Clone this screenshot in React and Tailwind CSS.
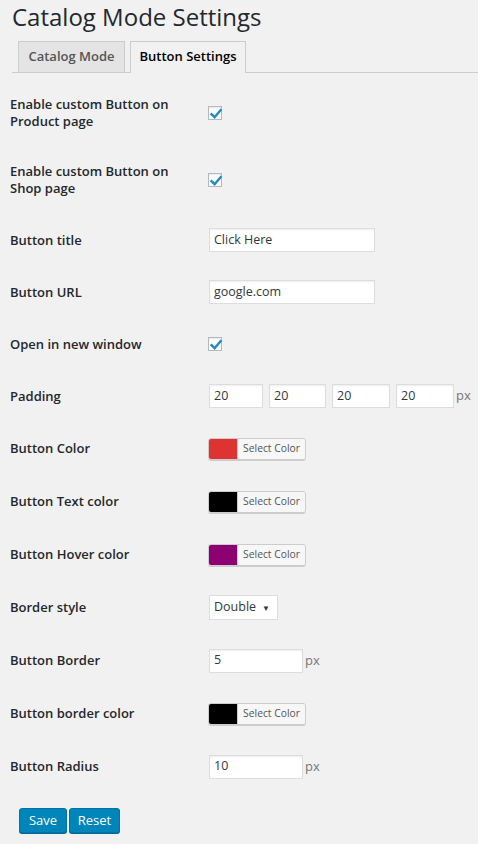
import React from "react";

const F = { fontFamily: '"Open Sans", "Liberation Sans", sans-serif' };

function Check() {
  return (
    <div className="w-[14px] h-[14px] border border-[#b4b9be] bg-white shadow-[inset_0_1px_2px_rgba(0,0,0,0.1)] relative ml-[-1px]">
      <svg viewBox="0 0 16 16" className="absolute left-[-1px] top-[-1px] w-[16px] h-[16px]">
        <path d="M3.5 8.2 L6.6 11.2 L12.6 4.2" fill="none" stroke="#1e8cbe" strokeWidth="2.4" strokeLinecap="square" />
      </svg>
    </div>
  );
}

function TextInput({ value, w }) {
  return (
    <div
      className={`h-[24px] border border-[#ddd] bg-white shadow-[inset_0_1px_2px_rgba(0,0,0,0.07)] flex items-center pl-[4px] text-[12.5px] text-[#32373c] ${w}`}
    >
      {value}
    </div>
  );
}

function ColorPick({ color }) {
  return (
    <div className="ml-[-1px] flex h-[22px] w-[98px] rounded-[3px] border border-[#ccc] shadow-[0_1px_0_#ccc] overflow-hidden">
      <div className="w-[28px] h-full" style={{ background: color }} />
      <div className="flex-1 bg-[#f7f7f7] border-l border-[#ccc] flex items-center justify-center text-[10.3px] text-[#555]">
        Select Color
      </div>
    </div>
  );
}

function Row({ label, h, children }) {
  return (
    <div className={`flex items-center ${h}`}>
      <div className="w-[209px] shrink-0 pl-[10px] text-[13px] font-semibold leading-[17px] text-[#23282d]">{label}</div>
      <div className="flex items-center">{children}</div>
    </div>
  );
}

export default function App() {
  return (
    <div className="w-[478px] h-[844px] bg-[#f1f1f1] overflow-hidden" style={F}>
      <h1 className="pl-[12px] pt-[2px] text-[24px] leading-[29px] font-normal text-[#23282d]">Catalog Mode Settings</h1>
      <div className="ml-[12px] mt-[10px] border-b border-[#ccc] flex gap-[5px] pl-[6px] h-[32px]">
        <div className="w-[107px] h-[31px] border border-b-0 border-[#ccc] bg-[#e4e4e4] flex items-center justify-center text-[13px] font-semibold text-[#555]">
          Catalog Mode
        </div>
        <div className="w-[116px] h-[32px] border border-b-0 border-[#ccc] bg-[#f1f1f1] flex items-center justify-center text-[13px] font-semibold text-[#000] mb-[-1px] pb-[1px]">
          Button Settings
        </div>
      </div>
      <div className="mt-[7px]">
        <Row label={<>Enable custom Button on<br />Product page</>} h="h-[66px]"><Check /></Row>
        <Row label={<>Enable custom Button on<br />Shop page</>} h="h-[68px]"><Check /></Row>
        <Row label="Button title" h="h-[52px]"><TextInput value="Click Here" w="w-[166px]" /></Row>
        <Row label="Button URL" h="h-[52px]"><TextInput value="google.com" w="w-[166px]" /></Row>
        <Row label="Open in new window" h="h-[52px]"><Check /></Row>
        <Row label="Padding" h="h-[52px]">
          <div className="flex items-center gap-[6px]">
            <TextInput value="20" w="w-[54px]" />
            <TextInput value="20" w="w-[57px]" />
            <TextInput value="20" w="w-[58px]" />
            <TextInput value="20" w="w-[58px]" />
          </div>
          <span className="ml-[2px] text-[13px] text-[#777]">px</span>
        </Row>
        <Row label="Button Color" h="h-[53px]"><ColorPick color="#dd3333" /></Row>
        <Row label="Button Text color" h="h-[53px]"><ColorPick color="#000000" /></Row>
        <Row label="Button Hover color" h="h-[53px]"><ColorPick color="#8c0072" /></Row>
        <Row label="Border style" h="h-[53px]">
          <div className="h-[25px] w-[69px] border border-[#ddd] bg-white flex items-center pl-[4px] text-[12.5px] text-[#32373c]">
            Double<span className="ml-[6px] text-[8px]">▼</span>
          </div>
        </Row>
        <Row label="Button Border" h="h-[53px]">
          <TextInput value="5" w="w-[94px]" />
          <span className="ml-[2px] text-[13px] text-[#777]">px</span>
        </Row>
        <Row label="Button border color" h="h-[53px]"><ColorPick color="#000000" /></Row>
        <Row label="Button Radius" h="h-[53px]">
          <TextInput value="10" w="w-[94px]" />
          <span className="ml-[2px] text-[13px] text-[#777]">px</span>
        </Row>
      </div>
      <div className="flex gap-[2px] pl-[19px] mt-[15px]">
        <div className="h-[25px] w-[48px] rounded-[3px] bg-[#0085ba] border border-[#0073aa] shadow-[0_1px_0_#006799] text-white text-[13px] flex items-center justify-center">Save</div>
        <div className="h-[25px] w-[51px] rounded-[3px] bg-[#0085ba] border border-[#0073aa] shadow-[0_1px_0_#006799] text-white text-[13px] flex items-center justify-center">Reset</div>
      </div>
    </div>
  );
}
